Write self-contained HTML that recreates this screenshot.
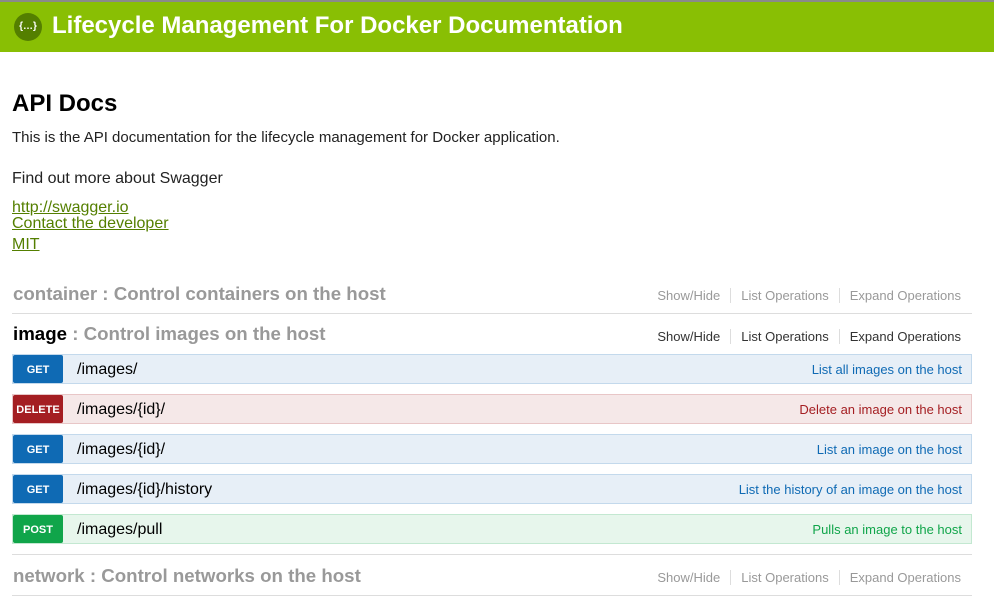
<!DOCTYPE html>
<html><head><meta charset="utf-8"><style>
*{margin:0;padding:0;box-sizing:border-box}
body{width:994px;height:598px;overflow:hidden;background:#fff;font-family:"Liberation Sans",Arial,sans-serif;color:#222;position:relative}
.hdr{position:absolute;left:0;top:0;width:994px;height:52px;background:#89bf04;border-top:2px solid #8a8a8a}
.logo{position:absolute;left:14px;top:11px;width:28px;height:28px;border-radius:50%;background:#547f00;color:#fff;font-size:10px;font-weight:bold;text-align:center;line-height:28px}
.title{position:absolute;left:52px;top:10px;color:#fff;font-weight:bold;font-size:24px;letter-spacing:0px;white-space:nowrap}
.a{position:absolute;white-space:nowrap}
h1{position:absolute;left:12px;top:90px;font-size:24px;font-weight:bold;color:#000}
.lnk{color:#547f00;text-decoration:underline;font-size:16px}
.sec{position:absolute;left:13px;font-size:18.7px;font-weight:bold;color:#999;white-space:nowrap}
.sec b{color:#000}
.ops{position:absolute;right:33px;font-size:13px;color:#999}
.ops span{padding:0 10px;border-left:1px solid #ddd}
.ops span:first-child{border-left:none}
.ops span:last-child{padding-right:0}
.line{position:absolute;left:12px;width:960px;height:1px;background:#ddd}
.row{position:absolute;left:12px;width:960px;height:30px;border:1px solid}
.badge{position:absolute;left:0;top:0;width:50px;height:28px;border-radius:2px;color:#fff;font-size:11px;font-weight:bold;text-align:center;line-height:31px}
.path{position:absolute;left:64px;top:6px;font-size:16px;color:#000}
.desc{position:absolute;right:9px;top:7px;font-size:13px}
.get{background:#e7eff7;border-color:#c3d9ec}.get .badge{background:#0f6ab4}.get .desc{color:#0f6ab4}
.del{background:#f5e8e8;border-color:#e8c6c7}.del .badge{background:#a41e22}.del .desc{color:#a41e22}
.post{background:#e7f6ec;border-color:#c3e8d1}.post .badge{background:#10a54a}.post .desc{color:#10a54a}
</style></head><body>
<div class="hdr"><div class="logo">{…}</div><div class="title">Lifecycle Management For Docker Documentation</div></div>
<h1>API Docs</h1>
<div class="a" style="left:12px;top:129px;font-size:15px">This is the API documentation for the lifecycle management for Docker application.</div>
<div class="a" style="left:12px;top:170px;font-size:16px">Find out more about Swagger</div>
<div class="a lnk" style="left:12px;top:199px">http://swagger.io</div>
<div class="a lnk" style="left:12px;top:215px">Contact the developer</div>
<div class="a lnk" style="left:12px;top:236px">MIT</div>

<div class="sec" style="top:283px">container : Control containers on the host</div>
<div class="ops" style="top:288px"><span>Show/Hide</span><span>List Operations</span><span>Expand Operations</span></div>
<div class="line" style="top:313px"></div>

<div class="sec" style="top:323px"><b>image</b> : Control images on the host</div>
<div class="ops" style="top:329px;color:#333"><span>Show/Hide</span><span>List Operations</span><span>Expand Operations</span></div>

<div class="row get" style="top:354px"><div class="badge">GET</div><div class="path">/images/</div><div class="desc">List all images on the host</div></div>
<div class="row del" style="top:394px"><div class="badge">DELETE</div><div class="path">/images/{id}/</div><div class="desc">Delete an image on the host</div></div>
<div class="row get" style="top:434px"><div class="badge">GET</div><div class="path">/images/{id}/</div><div class="desc">List an image on the host</div></div>
<div class="row get" style="top:474px"><div class="badge">GET</div><div class="path">/images/{id}/history</div><div class="desc">List the history of an image on the host</div></div>
<div class="row post" style="top:514px"><div class="badge">POST</div><div class="path">/images/pull</div><div class="desc">Pulls an image to the host</div></div>
<div class="line" style="top:554px"></div>

<div class="sec" style="top:565px">network : Control networks on the host</div>
<div class="ops" style="top:570px"><span>Show/Hide</span><span>List Operations</span><span>Expand Operations</span></div>
<div class="line" style="top:595px"></div>
</body></html>
